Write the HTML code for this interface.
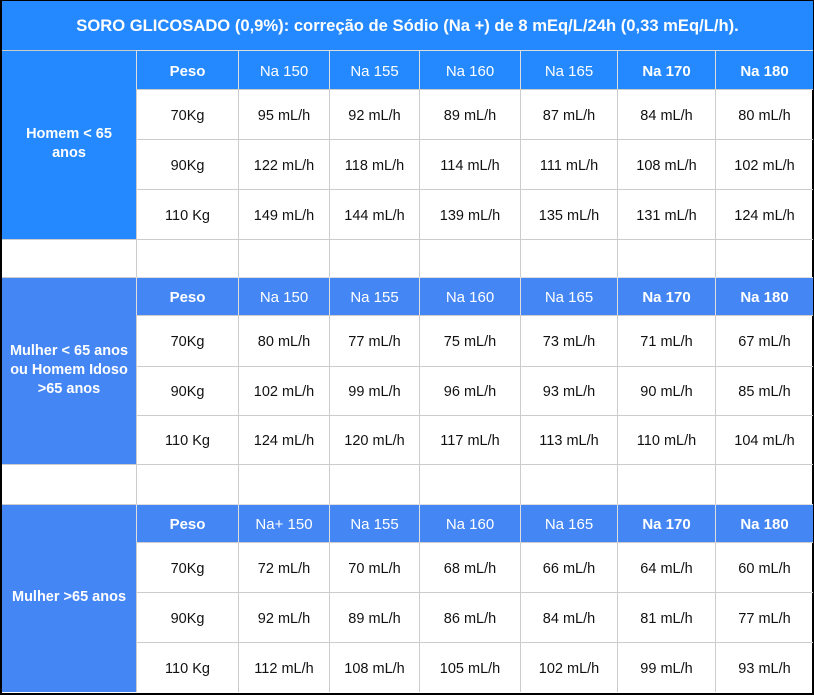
<!DOCTYPE html>
<html><head><meta charset="utf-8"><style>
*{box-sizing:border-box;margin:0;padding:0}
body{width:814px;height:695px;background:#fff;font-family:"Liberation Sans",Arial,sans-serif;position:relative;overflow:hidden}
#frame{position:absolute;left:0;top:0;width:814px;height:695px;border:2px solid #000;border-top-width:1px;border-bottom-width:2px}
#title{position:absolute;left:2px;top:1px;width:811px;height:49px;background:#2489ff;color:#fff;font-weight:bold;font-size:16.6px;text-align:center;line-height:50px}
#g{position:absolute;left:2px;top:50px;width:811px;display:grid;grid-template-columns:134px 102px 91px 90px 101px 97px 98px 98px;grid-template-rows:39px 50px 50px 50px 38px 38px 51px 49px 49px 40px 38px 50px 50px 50px}
#g div{border-top:1px solid #ccc;border-left:1px solid #ccc;display:flex;align-items:center;justify-content:center;font-size:14.5px;color:#111;text-align:center;padding-top:2px}
#g .h{color:#fff;border-top-color:#ddd;border-left-color:#ddd;font-size:15px}
#g .s1{background:#2489ff}
#g .s2{background:#4486f4}
#g .b{font-weight:bold}
#g .lab{border-left:none;color:#fff;font-weight:bold;grid-row:span 4;line-height:19px;padding-bottom:4px;font-size:14.5px}
#g .sp{border-left:none}
</style></head><body>
<div id="frame"></div>
<div id="title">SORO GLICOSADO (0,9%): correção de Sódio (Na +) de 8 mEq/L/24h (0,33 mEq/L/h).</div>
<div id="g">
<div class="lab s1">Homem &lt; 65<br>anos</div>
<div class="h s1 b">Peso</div><div class="h s1">Na 150</div><div class="h s1">Na 155</div><div class="h s1">Na 160</div><div class="h s1">Na 165</div><div class="h s1 b">Na 170</div><div class="h s1 b">Na 180</div>
<div>70Kg</div><div>95 mL/h</div><div>92 mL/h</div><div>89 mL/h</div><div>87 mL/h</div><div>84 mL/h</div><div>80 mL/h</div>
<div>90Kg</div><div>122 mL/h</div><div>118 mL/h</div><div>114 mL/h</div><div>111 mL/h</div><div>108 mL/h</div><div>102 mL/h</div>
<div>110 Kg</div><div>149 mL/h</div><div>144 mL/h</div><div>139 mL/h</div><div>135 mL/h</div><div>131 mL/h</div><div>124 mL/h</div>
<div class="sp"></div><div></div><div></div><div></div><div></div><div></div><div></div><div></div>
<div class="lab s2">Mulher &lt; 65 anos<br>ou Homem Idoso<br>&gt;65 anos</div>
<div class="h s2 b">Peso</div><div class="h s2">Na 150</div><div class="h s2">Na 155</div><div class="h s2">Na 160</div><div class="h s2">Na 165</div><div class="h s2 b">Na 170</div><div class="h s2 b">Na 180</div>
<div>70Kg</div><div>80 mL/h</div><div>77 mL/h</div><div>75 mL/h</div><div>73 mL/h</div><div>71 mL/h</div><div>67 mL/h</div>
<div>90Kg</div><div>102 mL/h</div><div>99 mL/h</div><div>96 mL/h</div><div>93 mL/h</div><div>90 mL/h</div><div>85 mL/h</div>
<div>110 Kg</div><div>124 mL/h</div><div>120 mL/h</div><div>117 mL/h</div><div>113 mL/h</div><div>110 mL/h</div><div>104 mL/h</div>
<div class="sp"></div><div></div><div></div><div></div><div></div><div></div><div></div><div></div>
<div class="lab s2">Mulher &gt;65 anos</div>
<div class="h s2 b">Peso</div><div class="h s2">Na+ 150</div><div class="h s2">Na 155</div><div class="h s2">Na 160</div><div class="h s2">Na 165</div><div class="h s2 b">Na 170</div><div class="h s2 b">Na 180</div>
<div>70Kg</div><div>72 mL/h</div><div>70 mL/h</div><div>68 mL/h</div><div>66 mL/h</div><div>64 mL/h</div><div>60 mL/h</div>
<div>90Kg</div><div>92 mL/h</div><div>89 mL/h</div><div>86 mL/h</div><div>84 mL/h</div><div>81 mL/h</div><div>77 mL/h</div>
<div>110 Kg</div><div>112 mL/h</div><div>108 mL/h</div><div>105 mL/h</div><div>102 mL/h</div><div>99 mL/h</div><div>93 mL/h</div>
</div>
</body></html>
